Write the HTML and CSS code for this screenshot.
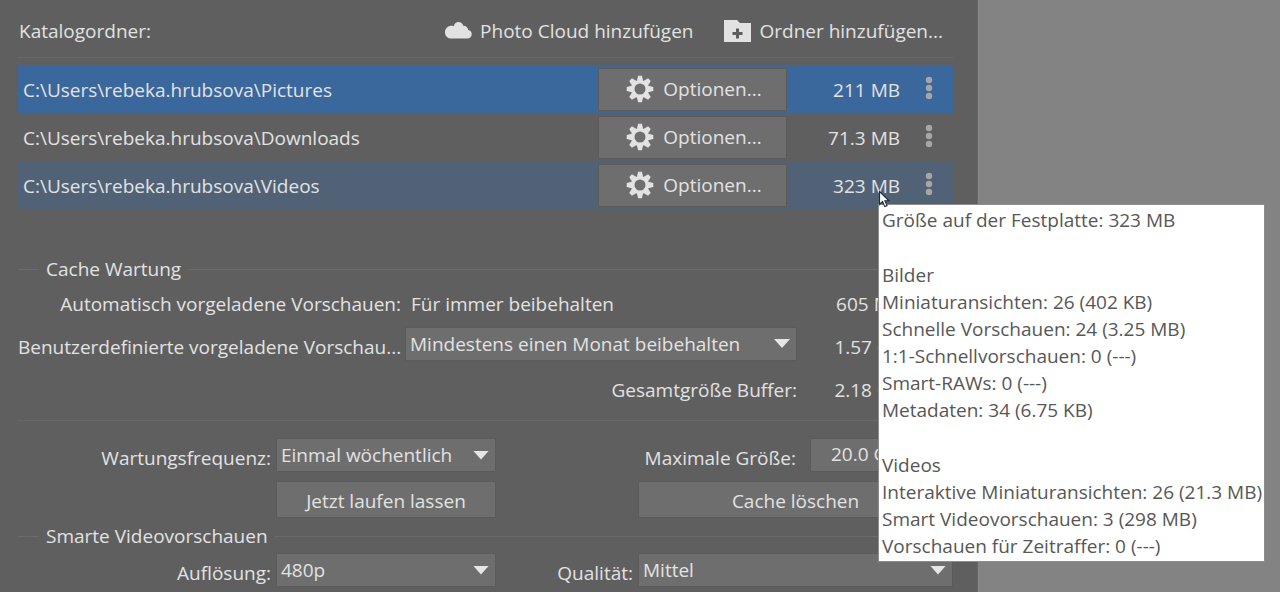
FILE: index.html
```html
<!DOCTYPE html>
<html lang="de">
<head>
<meta charset="utf-8">
<title>Katalogordner</title>
<link rel="stylesheet" href="styles.css">
</head>
<body>
<svg class="defs" aria-hidden="true">
  <symbol id="gear" viewBox="-14 -14 28 28">
    <g fill="currentColor">
      <path id="tooth" d="M-1.900-13.300h3.800l1.500 6h-6.800z"/>
      <use href="#tooth" transform="rotate(45)"/>
      <use href="#tooth" transform="rotate(90)"/>
      <use href="#tooth" transform="rotate(135)"/>
      <use href="#tooth" transform="rotate(180)"/>
      <use href="#tooth" transform="rotate(225)"/>
      <use href="#tooth" transform="rotate(270)"/>
      <use href="#tooth" transform="rotate(315)"/>
    </g>
    <circle r="7.300" fill="none" stroke="currentColor" stroke-width="3.600"/>
  </symbol>
  <symbol id="dots" viewBox="0 0 8 24">
    <g fill="currentColor"><circle cx="4" cy="4" r="3.200"/><circle cx="4" cy="12" r="3.200"/><circle cx="4" cy="20" r="3.200"/></g>
  </symbol>
</svg>
<div class="window">
  <main class="panel">
    <header class="header">
      <h1 class="title">Katalogordner:</h1>
      <button class="link-button" type="button">
        <svg class="icon" viewBox="0 0 28 24"><path fill="currentColor" d="M6 19.500a6 6 0 0 1-6-6.300C0 9.500 3 6.800 6.500 6.800c.8 0 1.500.1 2.200.4C9.300 4.500 11.200 3 13.500 3s4.200 1.400 4.800 3.700c2.800 0 4.700 1.700 4.900 4.400 2.100.3 3.500 1.900 3.500 4.100 0 2.500-1.800 4.300-4.200 4.300z"/></svg>
        Photo Cloud hinzufügen
      </button>
      <button class="link-button" type="button">
        <svg class="icon" viewBox="0 0 28 24"><path fill="currentColor" fill-rule="evenodd" d="M0 1h13l3 3h11v19H0zM12 9.500v3.500H8.500v3H12v3.500h3V16h3.500v-3H15V9.500z"/></svg>
        Ordner hinzufügen...
      </button>
    </header>

    <ul class="folders">
      <li class="folder selected">
        <span class="path">C:\Users\rebeka.hrubsova\Pictures</span>
        <button class="button options" type="button"><svg class="gear"><use href="#gear"/></svg>Optionen...</button>
        <span class="size">211 MB</span>
        <button class="more" type="button" aria-label="Mehr"><svg class="dots"><use href="#dots"/></svg></button>
      </li>
      <li class="folder">
        <span class="path">C:\Users\rebeka.hrubsova\Downloads</span>
        <button class="button options" type="button"><svg class="gear"><use href="#gear"/></svg>Optionen...</button>
        <span class="size">71.3 MB</span>
        <button class="more" type="button" aria-label="Mehr"><svg class="dots"><use href="#dots"/></svg></button>
      </li>
      <li class="folder hovered">
        <span class="path">C:\Users\rebeka.hrubsova\Videos</span>
        <button class="button options" type="button"><svg class="gear"><use href="#gear"/></svg>Optionen...</button>
        <span class="size">323 MB</span>
        <button class="more" type="button" aria-label="Mehr"><svg class="dots"><use href="#dots"/></svg></button>
        <svg class="cursor" viewBox="0 0 12 18"><path d="M.6.800v14.200l3.300-3.200 2.400 5.500 2.500-1.100-2.400-5.300h4.500z" fill="#fff" stroke="#222b3a" stroke-width="1.200"/></svg>
        <div class="tooltip" role="tooltip">
          <p class="lines">Größe auf der Festplatte: 323 MB</p>
          <p class="lines">Bilder<br>Miniaturansichten: 26 (402 KB)<br>Schnelle Vorschauen: 24 (3.25 MB)<br>1:1-Schnellvorschauen: 0 (---)<br>Smart-RAWs: 0 (---)<br>Metadaten: 34 (6.75 KB)</p>
          <p class="lines">Videos<br>Interaktive Miniaturansichten: 26 (21.3 MB)<br>Smart Videovorschauen: 3 (298 MB)<br>Vorschauen für Zeitraffer: 0 (---)</p>
        </div>
      </li>
    </ul>

    <section class="cache">
      <h2 class="legend">Cache Wartung</h2>
      <div class="usage">
        <span class="label">Automatisch vorgeladene Vorschauen:</span>
        <span class="fixed">Für immer beibehalten</span>
        <span class="amount">605 MB</span>
        <label class="label" for="keep">Benutzerdefinierte vorgeladene Vorschau...</label>
        <span class="select raised"><select id="keep"><option>Mindestens einen Monat beibehalten</option></select></span>
        <span class="amount">1.57 GB</span>
        <span class="label total">Gesamtgröße Buffer:</span>
        <span class="amount">2.18 GB</span>
      </div>
      <div class="upkeep">
        <label class="label" for="freq">Wartungsfrequenz:</label>
        <span class="select"><select id="freq"><option>Einmal wöchentlich</option></select></span>
        <div class="limit">
          <label class="label" for="max">Maximale Größe:</label>
          <input class="field" id="max" type="text" value="20.0 GB">
        </div>
        <button class="button run" type="button">Jetzt laufen lassen</button>
        <button class="button clear" type="button">Cache löschen</button>
      </div>
    </section>

    <section class="smart">
      <h2 class="legend">Smarte Videovorschauen</h2>
      <div class="video">
        <label class="label" for="res">Auflösung:</label>
        <span class="select"><select id="res"><option>480p</option></select></span>
        <label class="label" for="quality">Qualität:</label>
        <span class="select"><select id="quality"><option>Mittel</option></select></span>
      </div>
    </section>
  </main>
</div>
</body>
</html>
```
FILE: styles.css
```css
* { box-sizing: border-box; }

body {
  margin: 0;
  background: #838383;
  color: #e2e2e2;
  font: 19px/28px "Open Sans", "Noto Sans", sans-serif;
}

button, select, input {
  margin: 0;
  padding: 0;
  border: 0;
  border-radius: 0;
  background: none;
  color: inherit;
  font: inherit;
}

svg { display: block; flex: none; }
.defs { position: absolute; width: 0; height: 0; }

.window {
  min-height: 100vh;
  padding-right: 302px;
  display: flex;
}

.panel {
  flex: 1;
  min-width: 0;
  padding: 0 24px 4px 18px;
  background: #5f5f5f;
  border-right: 1px solid #686868;
}

.header {
  display: flex;
  align-items: center;
  gap: 31px;
  height: 58px;
  padding: 5px 10px 0 1px;
  border-bottom: 1px solid #696969;
}

.title {
  flex: 1;
  margin: 0;
  font-size: inherit;
  font-weight: 400;
}

.link-button {
  display: flex;
  align-items: center;
  gap: 7px;
  white-space: nowrap;
}

.icon { width: 28px; height: 24px; }

.folders {
  margin: 7px 0 0;
  padding: 0;
  list-style: none;
}

.folder {
  position: relative;
  display: grid;
  grid-template-columns: 1fr 189px 113px 53px;
  align-items: center;
  height: 48px;
  padding-left: 5px;
}

.selected { background: #3a679c; }
.hovered { background: #516276; }
.path, .size { padding-top: 2px; }
.size { text-align: right; }

.button {
  height: 36px;
  background: #6e6e6e;
  border: 1px solid #5b5b5b;
}

.options {
  display: flex;
  align-items: center;
  justify-content: center;
  gap: 9px;
  height: 43px;
  padding-left: 3px;
}

.gear { width: 28px; height: 28px; }

.more {
  justify-self: center;
  padding: 0 4px 2px 8px;
  color: #a6a6a6;
}

.dots { width: 8px; height: 24px; }

.cursor {
  position: absolute;
  right: 63px;
  bottom: 1px;
  z-index: 2;
  width: 11px;
  height: 18px;
}

.tooltip {
  position: absolute;
  top: 43px;
  left: calc(100% - 75px);
  z-index: 1;
  display: flex;
  flex-direction: column;
  gap: 28px;
  width: max-content;
  padding: 2px 2px 1px 3px;
  background: #fff;
  border: 1px solid #8d8d8d;
  color: #575757;
  line-height: 27px;
  white-space: nowrap;
}

.lines { margin: 0; }

.legend {
  display: flex;
  align-items: center;
  gap: 7px;
  margin: 0;
  font-size: inherit;
  font-weight: 400;
}

.legend::before, .legend::after {
  content: "";
  width: 21px;
  height: 1px;
  background: #6b6b6b;
}

.legend::after { flex: 1; }

.cache { margin-top: 46px; }

.label { text-align: right; white-space: nowrap; }

.usage {
  display: grid;
  grid-template-columns: 383px 1fr 102px;
  grid-template-rows: 42px 43px 43px;
  align-items: center;
  column-gap: 4px;
  padding-right: 50px;
  border-bottom: 1px solid #696969;
  height: 138px;
}

.fixed { padding-left: 6px; }
.amount { text-align: right; }
.total { grid-column: 1 / 3; }

.select { display: grid; align-items: center; }
.select > select, .select::after { grid-area: 1 / 1; }
.raised { padding-bottom: 6px; }

.select::after {
  content: "";
  justify-self: end;
  width: 16px;
  height: 9px;
  margin-right: 7px;
  background: #e6e6e6;
  clip-path: polygon(0 0, 100% 0, 50% 100%);
  pointer-events: none;
}

.select > select, .field {
  width: 100%;
  height: 34px;
  background: #6e6e6e;
  border: 1px solid #5b5b5b;
}

.select > select {
  appearance: none;
  padding: 0 28px 0 4px;
}

.upkeep {
  display: grid;
  grid-template-columns: 253px 220px 1fr;
  align-items: center;
  gap: 9px 5px;
  padding-top: 17px;
}

.limit {
  display: grid;
  grid-template-columns: 1fr 143px;
  align-items: center;
  gap: 14px;
}

.upkeep .label, .video .label { padding-top: 6px; }
.field { padding: 0 0 2px 20px; }
.run { grid-column: 2; }
.run, .clear { height: 37px; padding-top: 2px; }
.clear { margin-left: 137px; }

.smart { margin-top: 4px; }

.video {
  display: grid;
  grid-template-columns: 253px 220px 1fr 315px;
  align-items: center;
  column-gap: 5px;
  padding-top: 3px;
}
```
